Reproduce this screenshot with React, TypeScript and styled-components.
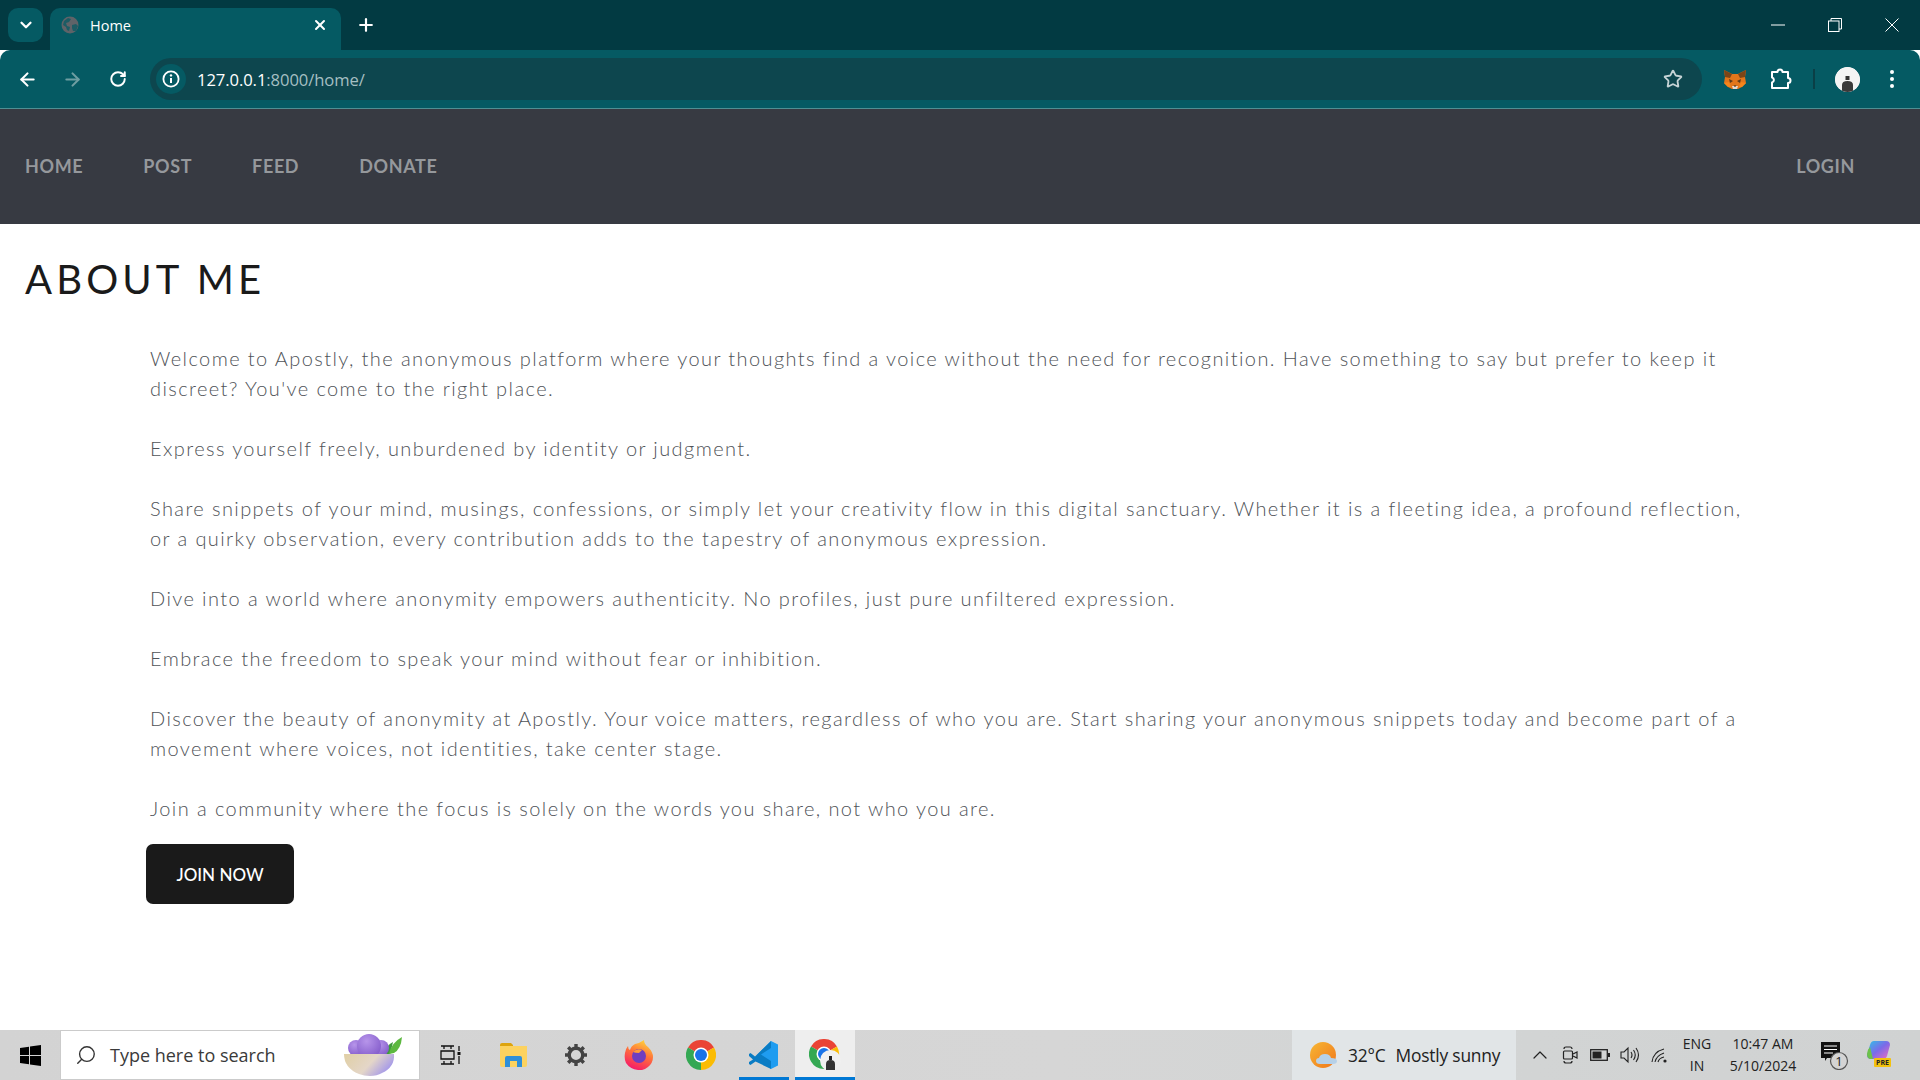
import React from 'react';
import styled, { createGlobalStyle } from 'styled-components';
import { ArrowLeft, ArrowRight, ChevronDown, ChevronUp, RotateCw, Search, Star, X, Plus } from 'lucide-react';

const GlobalStyle = createGlobalStyle`
  html, body {
    margin: 0;
    padding: 0;
    background: #fff;
    font-family: 'Lato', 'Open Sans', sans-serif;
  }
  * { box-sizing: border-box; }
`;

const Page = styled.div`
  width: 1920px;
  height: 1080px;
  display: flex;
  flex-direction: column;
  overflow: hidden;
`;

/* browser chrome */
const TabStrip = styled.div`
  height: 50px;
  background: #023a42;
  display: flex;
  padding: 8px 0 0 8px;
`;

const TabSearch = styled.div`
  width: 35px;
  height: 34px;
  border-radius: 10px;
  background: #055a63;
  color: #fff;
  display: flex;
  align-items: center;
  justify-content: center;
`;

const Tab = styled.div`
  width: 291px;
  height: 42px;
  margin-left: 7px;
  padding: 0 13px 8px 11px;
  border-radius: 10px 10px 0 0;
  background: #055a63;
  color: #fff;
  display: flex;
  align-items: center;
  font-family: 'Open Sans', sans-serif;
  font-size: 14.5px;
`;

const TabTitle = styled.span`
  margin-left: 11px;
  flex: 1;
`;

const NewTab = styled.div`
  width: 50px;
  height: 34px;
  color: #fff;
  display: flex;
  align-items: center;
  justify-content: center;
`;

const WindowControls = styled.div`
  margin-left: auto;
  margin-top: -8px;
  display: flex;
  height: 50px;
`;

const WindowButton = styled.div`
  width: 57px;
  display: flex;
  align-items: center;
  justify-content: center;
`;

const Toolbar = styled.div`
  height: 58px;
  background: #055a63;
  border-radius: 10px 10px 0 0;
  display: flex;
  align-items: center;
  padding: 0 0 0 5px;
`;

const ToolIcon = styled.div<{ $dim?: boolean }>`
  width: 45px;
  height: 42px;
  color: ${p => (p.$dim ? '#6f9ea2' : '#fff')};
  display: flex;
  align-items: center;
  justify-content: center;
`;

const Omnibox = styled.div`
  width: 1552px;
  height: 42px;
  margin-left: 10px;
  margin-right: 10px;
  padding: 0 19px 0 6px;
  border-radius: 21px;
  background: #0d464e;
  display: flex;
  align-items: center;
`;

const InfoBadge = styled.div`
  width: 30px;
  height: 30px;
  border-radius: 50%;
  background: #055a63;
  display: flex;
  align-items: center;
  justify-content: center;
`;

const Url = styled.div`
  margin-left: 11px;
  flex: 1;
  font-family: 'Open Sans', sans-serif;
  font-size: 16.6px;
  letter-spacing: -0.08px;
  color: #a5bfc2;
`;

const UrlHost = styled.span`
  color: #fff;
`;

const ExtensionSlot = styled.div`
  width: 46px;
  height: 42px;
  display: flex;
  align-items: center;
  justify-content: center;
`;

const ToolDivider = styled.div`
  width: 2px;
  height: 20px;
  margin: 0 20px 0 9px;
  background: #0a3f46;
`;

const Avatar = styled.div`
  width: 25px;
  height: 25px;
  border-radius: 50%;
  background: #f4f4f4;
  overflow: hidden;
`;

const MenuSlot = styled.div`
  margin-left: 30px;
  display: flex;
  flex-direction: column;
  gap: 3px;
`;

const MenuDot = styled.span`
  width: 4px;
  height: 4px;
  border-radius: 50%;
  background: #fff;
`;

const ChromeEdge = styled.div`
  height: 1px;
  background: #4f8f93;
`;

/* site */
const NavBar = styled.nav`
  height: 115px;
  background: #373a42;
  display: flex;
  align-items: center;
  padding: 0 65px 2px 25px;
`;

const NavLink = styled.a`
  margin-right: 60px;
  font-family: 'Lato', sans-serif;
  font-size: 18px;
  font-weight: 700;
  letter-spacing: 0.62px;
  color: #95989c;
`;

const LoginLink = styled(NavLink)`
  margin: 0 0 0 auto;
`;

const Main = styled.main`
  flex: 1;
  padding: 29px 0 0 0;
`;

const Title = styled.h1`
  margin: 0 0 0 25px;
  font-family: 'Lato', sans-serif;
  font-size: 40px;
  font-weight: 400;
  line-height: 52px;
  letter-spacing: 4.1px;
  color: #1a1a1a;
`;

const Content = styled.div`
  margin: 38px 0 0 146px;
  width: 1620px;
`;

const Paragraph = styled.p`
  margin: 0 0 30px;
  padding-left: 4px;
  font-family: 'Lato', sans-serif;
  font-size: 20px;
  font-weight: 300;
  line-height: 30px;
  letter-spacing: 1.41px;
  color: #4f5358;
`;

const JoinButton = styled.button`
  display: block;
  width: 148px;
  height: 60px;
  margin-top: -9px;
  border: none;
  border-radius: 7px;
  background: #1a1a1a;
  color: #fff;
  font-family: 'Lato', sans-serif;
  font-size: 17px;
  font-weight: 500;
`;

/* windows taskbar */
const Taskbar = styled.footer`
  height: 50px;
  background: linear-gradient(90deg, #d3d3d3 0%, #d6d6d6 55%, #d3d5d5 70%, #d0d2d2 100%);
  display: flex;
  align-items: center;
`;

const StartButton = styled.div`
  width: 60px;
  height: 50px;
  display: flex;
  align-items: center;
  justify-content: center;
`;

const SearchBox = styled.div`
  width: 360px;
  height: 50px;
  padding: 0 16px 0 14px;
  background: #fff;
  border: 1px solid #cbcbcb;
  display: flex;
  align-items: center;
  color: #333;
`;

const SearchText = styled.span`
  flex: 1;
  margin-left: 13px;
  font-family: 'Open Sans', sans-serif;
  font-size: 18px;
  color: #3a3a3a;
`;

const TaskItem = styled.div<{ $open?: boolean; $active?: boolean }>`
  position: relative;
  width: ${p => (p.$active ? '60px' : '62.5px')};
  height: 50px;
  display: flex;
  align-items: center;
  justify-content: center;
  background: ${p => (p.$active ? '#eeeeee' : 'transparent')};

  &::after {
    content: '';
    display: ${p => (p.$open ? 'block' : 'none')};
    position: absolute;
    bottom: 0;
    left: ${p => (p.$active ? '0' : '6px')};
    right: ${p => (p.$active ? '0' : '6px')};
    height: 3px;
    background: #0078d4;
  }
`;

const Weather = styled.div`
  margin-left: auto;
  width: 224px;
  height: 50px;
  padding-left: 18px;
  background: #e1e5e7;
  display: flex;
  align-items: center;
  font-family: 'Open Sans', sans-serif;
  font-size: 17.4px;
  letter-spacing: -0.2px;
  color: #222;
`;

const WeatherTemp = styled.span`
  margin-left: 10px;
  margin-right: 10px;
`;

const Tray = styled.div`
  width: 404px;
  height: 50px;
  display: flex;
  align-items: center;
  padding-left: 9px;
  color: #222;
`;

const TrayIcon = styled.div`
  width: 30px;
  display: flex;
  justify-content: center;
`;

const TrayText = styled.div<{ $w: number }>`
  width: ${p => p.$w}px;
  font-family: 'Open Sans', sans-serif;
  font-size: 14px;
  line-height: 22px;
  text-align: center;
  color: #222;
`;

const NotifyWrap = styled.div`
  margin-left: 5px;
  width: 44px;
  display: flex;
  justify-content: center;
`;

const CopilotWrap = styled.div`
  margin-left: 10px;
`;

const Globe = () => (
  <svg width="18" height="18" viewBox="0 0 18 18">
    <circle cx="9" cy="9" r="8.5" fill="#5f6368" />
    <path d="M3 5l4-3 3 1-2 3-3 1 1 3 3 1-1 4-2-1-1-3-3-2zM11 9l4-1 2 2-2 5-3 0-1-3z" fill="#055a63" opacity="0.75" />
  </svg>
);

const Fox = () => (
  <svg width="22" height="21" viewBox="0 0 22 21">
    <path d="M0 1l8 4h6l8-4-1 7 1 6-4 4-4 2H8l-4-2-4-4 1-6z" fill="#e2761b" />
    <path d="M0 1l8 4-2 4-5-1zM22 1l-8 4 2 4 5-1z" fill="#7a4518" />
    <path d="M5 10l4 2-3 2zM17 10l-4 2 3 2z" fill="#5c3a1c" />
    <path d="M0 14l5-1 2 5-3 0zM22 14l-5-1-2 5 3 0z" fill="#f6851b" />
    <path d="M8 17h6l-1 3H9z" fill="#e8d6c8" />
    <path d="M9.5 16.5h3L11 18z" fill="#222" />
  </svg>
);

const PuzzleIcon = () => (
  <svg width="24" height="24" viewBox="0 0 24 24" fill="none" stroke="#fff" strokeWidth="2" strokeLinejoin="round">
    <path d="M3 5h5.5a2.5 2.5 0 0 1 5 0H19v6a2.5 2.5 0 0 1 0 5v5H3v-5.5a2.6 2.6 0 0 0 0-5z" />
  </svg>
);

const Person = ({ size }: { size: number }) => (
  <svg width={size} height={size} viewBox="0 0 25 25">
    <circle cx="12.5" cy="12.5" r="12.5" fill="#f4f4f4" />
    <rect x="10.5" y="9" width="4" height="4" fill="#333" />
    <path d="M7 25v-7q0-4 5.5-4T18 18v7z" fill="#3a3a3a" />
  </svg>
);

const WindowsLogo = () => (
  <svg width="21" height="21" viewBox="0 0 21 21" fill="#000">
    <path d="M0 3l9-1.3V10H0zM10 1.5L21 0v10H10zM0 11h9v8.3L0 18zM10 11h11v10l-11-1.5z" />
  </svg>
);

const Bowl = () => (
  <svg width="60" height="44" viewBox="0 0 60 44">
    <defs>
      <radialGradient id="berry" cx="0.4" cy="0.3" r="0.8">
        <stop offset="0" stopColor="#b795ea" />
        <stop offset="1" stopColor="#7f57c8" />
      </radialGradient>
      <linearGradient id="bowlFill" x1="0" y1="0" x2="1" y2="0.4">
        <stop offset="0" stopColor="#e0cfa4" />
        <stop offset="0.6" stopColor="#e4d6c8" />
        <stop offset="1" stopColor="#a79be8" />
      </linearGradient>
    </defs>
    <path d="M41 22q2-10 9-13l-3 13z" fill="#3f9a3c" />
    <path d="M46 21q2-11 13-17-1 12-8 16z" fill="#5cb83f" />
    <circle cx="13" cy="15" r="8" fill="url(#berry)" />
    <circle cx="38" cy="15" r="8" fill="url(#berry)" />
    <circle cx="26" cy="13" r="12" fill="url(#berry)" />
    <path d="M1 21h50q1 13-12 19-5 3-12 3-6 0-11-2Q1 35 1 21z" fill="url(#bowlFill)" />
  </svg>
);

const TaskView = () => (
  <svg width="22" height="20" viewBox="0 0 22 20" fill="none" stroke="#111" strokeWidth="1.3">
    <path d="M1 1h13M4 1v3M11 1v3M1 6h13v8H1zM1 19h13M4 16v3M11 16v3M19 1v5M19 11v8" />
    <rect x="17.5" y="7" width="3" height="3" fill="#111" stroke="none" />
  </svg>
);

const Folder = () => (
  <svg width="28" height="24" viewBox="0 0 28 24">
    <path d="M0 2q0-2 2-2h9l2 2v3H0z" fill="#dda40e" />
    <path d="M0 3h27v19q0 2-2 2H2q-2 0-2-2z" fill="#fcd25f" />
    <path d="M5 24v-9q0-2 2-2h13q2 0 2 2v9h-5v-6h-7v6z" fill="#2f8fd8" />
  </svg>
);

const Gear = () => (
  <svg width="24" height="24" viewBox="0 0 24 24" fill="none">
    <circle cx="12" cy="12" r="6.8" stroke="#444" strokeWidth="3.4" />
    <path d="M12 1v4M12 19v4M1 12h4M19 12h4M4.2 4.2l2.8 2.8M17 17l2.8 2.8M19.8 4.2L17 7M7 17l-2.8 2.8" stroke="#444" strokeWidth="3.4" />
  </svg>
);

const Firefox = () => (
  <svg width="30" height="30" viewBox="0 0 30 30">
    <defs>
      <linearGradient id="ffBody" x1="0.7" y1="0" x2="0.3" y2="1">
        <stop offset="0" stopColor="#ffd43a" />
        <stop offset="0.45" stopColor="#ff7139" />
        <stop offset="1" stopColor="#f5156c" />
      </linearGradient>
    </defs>
    <path d="M20 0q0 4 4 7 5 5 5 10 0 6-5 10t-10 3Q6 29 2 23 0 19 1 13q1-5 3-7 0 3 2 4 1-4 5-6 5-1 9-4z" fill="url(#ffBody)" />
    <circle cx="15" cy="16" r="7" fill="#6e3ebf" />
    <path d="M9 12q4-4 9-2l-3 3q-4 0-6-1z" fill="#ff9c34" />
  </svg>
);

const Chrome = () => (
  <svg width="30" height="30" viewBox="0 0 30 30">
    <path d="M15 15L2 7.5A15 15 0 0 1 28 7.5z" fill="#ea4335" />
    <path d="M15 15L28 7.5A15 15 0 0 1 15 30z" fill="#fbbc04" />
    <path d="M15 15L15 30A15 15 0 0 1 2 7.5z" fill="#34a853" />
    <circle cx="15" cy="15" r="7.5" fill="#fff" />
    <circle cx="15" cy="15" r="6" fill="#1a73e8" />
  </svg>
);

const VsCode = () => (
  <svg width="30" height="30" viewBox="0 0 30 30">
    <path d="M22 1l7 3.5v21L22 29 8 15z" fill="#1f9cf0" />
    <path d="M22 1L6 16.5 1.5 13 0 14v2l4 3.5L0 22v2l1.5 1 5-3.5L22 29V21l-10-6.5L22 8z" fill="#0a7cc4" />
  </svg>
);

const ChromeProfile = () => (
  <svg width="32" height="32" viewBox="0 0 32 32">
    <path d="M15 15L2 7.5A15 15 0 0 1 28 7.5z" fill="#ea4335" />
    <path d="M15 15L28 7.5A15 15 0 0 1 15 30z" fill="#fbbc04" />
    <path d="M15 15L15 30A15 15 0 0 1 2 7.5z" fill="#34a853" />
    <circle cx="15" cy="15" r="7.5" fill="#fff" />
    <circle cx="15" cy="15" r="6" fill="#1a73e8" />
    <g transform="translate(11 11)">
      <circle cx="10.5" cy="10.5" r="10.5" fill="#f0f0f0" />
      <rect x="9" y="6" width="3" height="4" fill="#222" />
      <path d="M6 20v-6q0-4 4.5-4T15 14v6z" fill="#333" />
    </g>
  </svg>
);

const SunCloud = () => (
  <svg width="28" height="30" viewBox="0 0 28 30">
    <defs>
      <linearGradient id="sun" x1="0" y1="0" x2="1" y2="1">
        <stop offset="0" stopColor="#f7b733" />
        <stop offset="1" stopColor="#f0761c" />
      </linearGradient>
    </defs>
    <circle cx="13" cy="15" r="13" fill="url(#sun)" />
    <path d="M10 24q-4 0-4-3t3-3q1-4 6-4t6 4q6 0 6 3t-4 3z" fill="#b7d1e8" />
  </svg>
);

const CameraTray = () => (
  <svg width="16" height="20" viewBox="0 0 16 20" fill="none" stroke="#222" strokeWidth="1.2">
    <path d="M2 4q0-2 2-2h4q2 0 2 2M2 16q0 2 2 2h4q2 0 2-2" />
    <rect x="1.5" y="6" width="9" height="8" rx="1" />
    <path d="M11 9l4-2v6l-4-2" />
  </svg>
);

const BatteryTray = () => (
  <svg width="20" height="12" viewBox="0 0 20 12">
    <rect x="0.7" y="0.7" width="16.6" height="10.6" fill="none" stroke="#222" strokeWidth="1.3" />
    <rect x="2.5" y="2.5" width="9" height="7" fill="#222" />
    <rect x="18" y="4" width="2" height="4" fill="#222" />
  </svg>
);

const SpeakerTray = () => (
  <svg width="20" height="18" viewBox="0 0 20 18" fill="none" stroke="#222" strokeWidth="1.1">
    <path d="M1 6h3l4-4v14l-4-4H1z" />
    <path d="M11 6q2 3 0 6M13.5 4q3.5 5 0 10M16 2q5 7 0 14" />
  </svg>
);

const WifiTray = () => (
  <svg width="18" height="18" viewBox="0 0 18 18" fill="none" stroke="#222" strokeWidth="1.1">
    <path d="M1 16Q2 6 13 3M4 16q1-6 9-9M7 16q1-4 6-5" />
    <circle cx="14" cy="15" r="1.6" fill="#222" stroke="none" />
  </svg>
);

const NotifyIcon = () => (
  <svg width="30" height="30" viewBox="0 0 30 30">
    <path d="M2 2h19v16H8l-2 3v-3H2z" fill="#111" />
    <path d="M5 6h13M5 9.5h13M5 13h9" stroke="#fff" strokeWidth="1.2" />
    <circle cx="20" cy="21" r="8.5" fill="#d4d4d4" stroke="#555" strokeWidth="1.2" />
    <text x="20" y="25.5" textAnchor="middle" fontFamily="Open Sans" fontSize="13" fill="#222">1</text>
  </svg>
);

const Copilot = () => (
  <svg width="26" height="28" viewBox="0 0 26 28">
    <defs>
      <linearGradient id="cp" x1="0" y1="0" x2="1" y2="1">
        <stop offset="0" stopColor="#2dc4e8" />
        <stop offset="0.5" stopColor="#7c6ae8" />
        <stop offset="1" stopColor="#ef6ec0" />
      </linearGradient>
    </defs>
    <path d="M8 1h12q4 0 4 4l-3 11q-1 3-4 3H5q-4 0-4-4l3-10q1-4 4-4z" fill="url(#cp)" />
    <path d="M1 14q0-4 3-7l3 12H5q-4 0-4-5z" fill="#6cc24a" />
    <rect x="8" y="18" width="17" height="9" rx="1" fill="#f4c20d" />
    <text x="16.5" y="25.4" textAnchor="middle" fontFamily="Open Sans" fontWeight="700" fontSize="7" fill="#222">PRE</text>
  </svg>
);

const paragraphs = [
  "Welcome to Apostly, the anonymous platform where your thoughts find a voice without the need for recognition. Have something to say but prefer to keep it discreet? You've come to the right place.",
  'Express yourself freely, unburdened by identity or judgment.',
  'Share snippets of your mind, musings, confessions, or simply let your creativity flow in this digital sanctuary. Whether it is a fleeting idea, a profound reflection, or a quirky observation, every contribution adds to the tapestry of anonymous expression.',
  'Dive into a world where anonymity empowers authenticity. No profiles, just pure unfiltered expression.',
  'Embrace the freedom to speak your mind without fear or inhibition.',
  'Discover the beauty of anonymity at Apostly. Your voice matters, regardless of who you are. Start sharing your anonymous snippets today and become part of a movement where voices, not identities, take center stage.',
  'Join a community where the focus is solely on the words you share, not who you are.',
];

export default function App() {
  return (
    <Page>
      <GlobalStyle />
      <TabStrip>
        <TabSearch>
          <ChevronDown size={18} strokeWidth={3} />
        </TabSearch>
        <Tab>
          <Globe />
          <TabTitle>Home</TabTitle>
          <X size={16} strokeWidth={3} />
        </Tab>
        <NewTab>
          <Plus size={20} strokeWidth={2.6} />
        </NewTab>
        <WindowControls>
          <WindowButton>
            <svg width="14" height="2" viewBox="0 0 14 2"><path d="M0 1h14" stroke="#fff" /></svg>
          </WindowButton>
          <WindowButton>
            <svg width="14" height="14" viewBox="0 0 14 14" fill="none" stroke="#fff">
              <rect x="0.5" y="3" width="10.5" height="10.5" />
              <path d="M3 3V0.5h10.5V11H11" />
            </svg>
          </WindowButton>
          <WindowButton>
            <svg width="14" height="14" viewBox="0 0 14 14" stroke="#fff"><path d="M0.5 0.5l13 13M13.5 0.5l-13 13" /></svg>
          </WindowButton>
        </WindowControls>
      </TabStrip>

      <Toolbar>
        <ToolIcon><ArrowLeft size={21} strokeWidth={2.4} /></ToolIcon>
        <ToolIcon $dim><ArrowRight size={21} strokeWidth={2.4} /></ToolIcon>
        <ToolIcon><RotateCw size={18} strokeWidth={2.6} /></ToolIcon>
        <Omnibox>
          <InfoBadge>
            <svg width="18" height="18" viewBox="0 0 18 18" fill="none">
              <circle cx="9" cy="9" r="7.6" stroke="#fff" strokeWidth="1.8" />
              <path d="M9 8v5" stroke="#fff" strokeWidth="2" />
              <circle cx="9" cy="5.4" r="1.2" fill="#fff" />
            </svg>
          </InfoBadge>
          <Url><UrlHost>127.0.0.1</UrlHost>:8000/home/</Url>
          <Star size={20} color="#c5d3d5" strokeWidth={2.2} />
        </Omnibox>
        <ExtensionSlot><Fox /></ExtensionSlot>
        <ExtensionSlot><PuzzleIcon /></ExtensionSlot>
        <ToolDivider />
        <Avatar><Person size={25} /></Avatar>
        <MenuSlot>
          <MenuDot />
          <MenuDot />
          <MenuDot />
        </MenuSlot>
      </Toolbar>
      <ChromeEdge />

      <NavBar>
        <NavLink>HOME</NavLink>
        <NavLink>POST</NavLink>
        <NavLink>FEED</NavLink>
        <NavLink>DONATE</NavLink>
        <LoginLink>LOGIN</LoginLink>
      </NavBar>

      <Main>
        <Title>ABOUT ME</Title>
        <Content>
          {paragraphs.map((text, i) => (
            <Paragraph key={i}>{text}</Paragraph>
          ))}
          <JoinButton>JOIN NOW</JoinButton>
        </Content>
      </Main>

      <Taskbar>
        <StartButton><WindowsLogo /></StartButton>
        <SearchBox>
          <Search size={22} strokeWidth={1.5} style={{ transform: 'scaleX(-1)' }} />
          <SearchText>Type here to search</SearchText>
          <Bowl />
        </SearchBox>
        <TaskItem><TaskView /></TaskItem>
        <TaskItem><Folder /></TaskItem>
        <TaskItem><Gear /></TaskItem>
        <TaskItem><Firefox /></TaskItem>
        <TaskItem><Chrome /></TaskItem>
        <TaskItem $open><VsCode /></TaskItem>
        <TaskItem $open $active><ChromeProfile /></TaskItem>
        <Weather>
          <SunCloud />
          <WeatherTemp>32°C</WeatherTemp>
          Mostly sunny
        </Weather>
        <Tray>
          <TrayIcon><ChevronUp size={24} strokeWidth={1.2} /></TrayIcon>
          <TrayIcon><CameraTray /></TrayIcon>
          <TrayIcon><BatteryTray /></TrayIcon>
          <TrayIcon><SpeakerTray /></TrayIcon>
          <TrayIcon><WifiTray /></TrayIcon>
          <TrayText $w={44}>ENG<br />IN</TrayText>
          <TrayText $w={88}>10:47 AM<br />5/10/2024</TrayText>
          <NotifyWrap><NotifyIcon /></NotifyWrap>
          <CopilotWrap><Copilot /></CopilotWrap>
        </Tray>
      </Taskbar>
    </Page>
  );
}
